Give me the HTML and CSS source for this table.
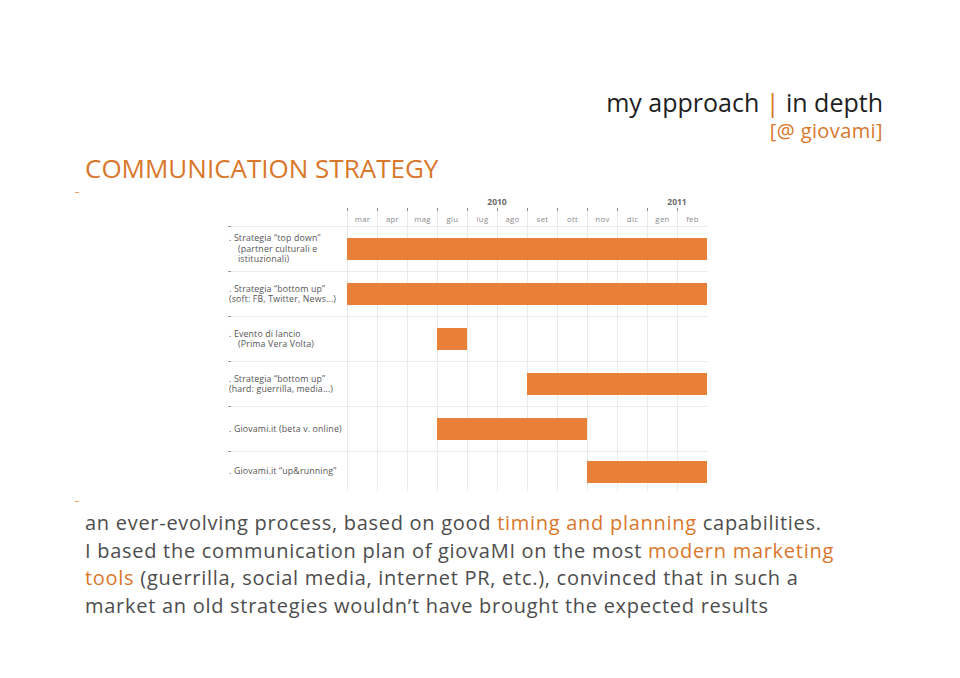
FILE: index.html
```html
<!DOCTYPE html>
<html lang="en">
<head>
<meta charset="utf-8">
<title>my approach | in depth</title>
<link rel="stylesheet" href="styles.css">
</head>
<body>
<div class="page">
  <header class="head">
    <div class="head-main">my approach <span class="accent">|</span> in depth</div>
    <div class="head-sub">[@ giovami]</div>
  </header>

  <h2 class="title">COMMUNICATION STRATEGY</h2>
  <div class="mark"></div>

  <div class="chart">
    <div class="chart-head">
      <div class="years">
        <span class="year y2010">2010</span>
        <span class="year y2011">2011</span>
      </div>
      <div class="months">
        <span class="month">mar</span>
        <span class="month">apr</span>
        <span class="month">mag</span>
        <span class="month">giu</span>
        <span class="month">lug</span>
        <span class="month">ago</span>
        <span class="month">set</span>
        <span class="month">ott</span>
        <span class="month">nov</span>
        <span class="month">dic</span>
        <span class="month">gen</span>
        <span class="month">feb</span>
      </div>
    </div>

    <div class="row">
      <div class="label"><span>. Strategia “top down”</span><span class="ind">(partner culturali e</span><span class="ind">istituzionali)</span></div>
      <div class="track"><div class="bar" style="grid-column: 1 / 13"></div></div>
    </div>
    <div class="row">
      <div class="label"><span>. Strategia “bottom up”</span><span>(soft: FB, Twitter, News...)</span></div>
      <div class="track"><div class="bar" style="grid-column: 1 / 13"></div></div>
    </div>
    <div class="row">
      <div class="label"><span>. Evento di lancio</span><span class="ind">(Prima Vera Volta)</span></div>
      <div class="track"><div class="bar" style="grid-column: 4 / 5"></div></div>
    </div>
    <div class="row">
      <div class="label"><span>. Strategia “bottom up”</span><span>(hard: guerrilla, media...)</span></div>
      <div class="track"><div class="bar" style="grid-column: 7 / 13"></div></div>
    </div>
    <div class="row">
      <div class="label"><span>. Giovami.it (beta v. online)</span></div>
      <div class="track"><div class="bar" style="grid-column: 4 / 9"></div></div>
    </div>
    <div class="row last">
      <div class="label"><span>. Giovami.it “up&amp;running”</span></div>
      <div class="track"><div class="bar" style="grid-column: 9 / 13"></div></div>
    </div>
  </div>

  <div class="mark mark-low"></div>

  <p class="text">an ever-evolving process, based on good <span class="accent">timing and planning</span> capabilities.<br>
I based the communication plan of giovaMI on the most <span class="accent">modern marketing<br>
tools</span> (guerrilla, social media, internet PR, etc.), convinced that in such a<br>
market an old strategies wouldn’t have brought the expected results</p>
</div>
</body>
</html>
```

FILE: styles.css
```css
html, body {
  margin: 0;
  padding: 0;
  background: #ffffff;
}

body {
  font-family: "Open Sans", Roboto, "Liberation Sans", sans-serif;
  color: #4d4d4d;
}

.page {
  width: 960px;
  height: 678px;
  box-sizing: border-box;
  padding-top: 87px;
  overflow: hidden;
}

.accent {
  color: #d9772b;
}

/* top-right heading */
.head {
  display: flex;
  flex-direction: column;
  align-items: flex-end;
  padding-right: 77px;
}

.head-main {
  font-size: 25px;
  line-height: 30px;
  color: #1e1e1e;
  font-weight: 400;
}

.head-sub {
  font-size: 20px;
  line-height: 28px;
  letter-spacing: 0.4px;
  color: #d9772b;
}

/* section title */
.title {
  margin: 8px 0 0 85px;
  font-size: 26px;
  line-height: 30px;
  font-weight: 400;
  color: #d9772b;
}

.mark {
  width: 4px;
  height: 1px;
  background: #e9a46c;
  margin: 9px 0 0 75px;
}

.mark-low {
  margin-top: 10px;
}

/* gantt chart */
.chart {
  margin: 1px 0 0 228px;
  width: 480px;
}

.chart-head {
  padding-left: 119px;
  border-bottom: 1px solid #e8eded;
}

.years {
  display: grid;
  grid-template-columns: repeat(12, 30px);
  height: 14px;
  align-items: center;
}

.year {
  font-size: 8.5px;
  font-weight: 700;
  color: #6a6a6a;
  text-align: center;
}

.y2010 { grid-column: 5 / 7; }
.y2011 { grid-column: 11 / 13; }

.months {
  display: grid;
  grid-template-columns: repeat(12, 30px);
  height: 18px;
}

.month {
  position: relative;
  border-left: 1px solid #e6ecec;
  font-size: 7.8px;
  color: #8a8a8a;
  text-align: center;
  line-height: 22px;
  letter-spacing: 0.3px;
}

.month::before {
  content: "";
  position: absolute;
  left: -1px;
  top: 0;
  width: 1px;
  height: 3px;
  background: #8a8a8a;
}

.row {
  position: relative;
  display: grid;
  grid-template-columns: 119px 360px;
  height: 44px;
  border-bottom: 1px solid #e8eded;
}

.row.last {
  height: 39px;
  border-bottom: none;
}

.row::before {
  content: "";
  position: absolute;
  left: 0;
  top: -1px;
  width: 3px;
  height: 1px;
  background: #9a9a9a;
}

.label {
  display: flex;
  flex-direction: column;
  justify-content: center;
  font-size: 8.8px;
  line-height: 10.5px;
  letter-spacing: 0.15px;
  color: #555555;
  padding-left: 1px;
}

.label .ind {
  padding-left: 9px;
}

.track {
  display: grid;
  grid-template-columns: repeat(12, 30px);
  align-items: center;
  background-image: repeating-linear-gradient(to right, #e6ecec 0, #e6ecec 1px, transparent 1px, transparent 30px);
}

.bar {
  height: 22px;
  background: #e9803a;
}

/* paragraph */
.text {
  margin: 7px 0 0 85px;
  font-size: 20px;
  line-height: 27.7px;
  letter-spacing: 0.72px;
  color: #4d4d4d;
}
```
